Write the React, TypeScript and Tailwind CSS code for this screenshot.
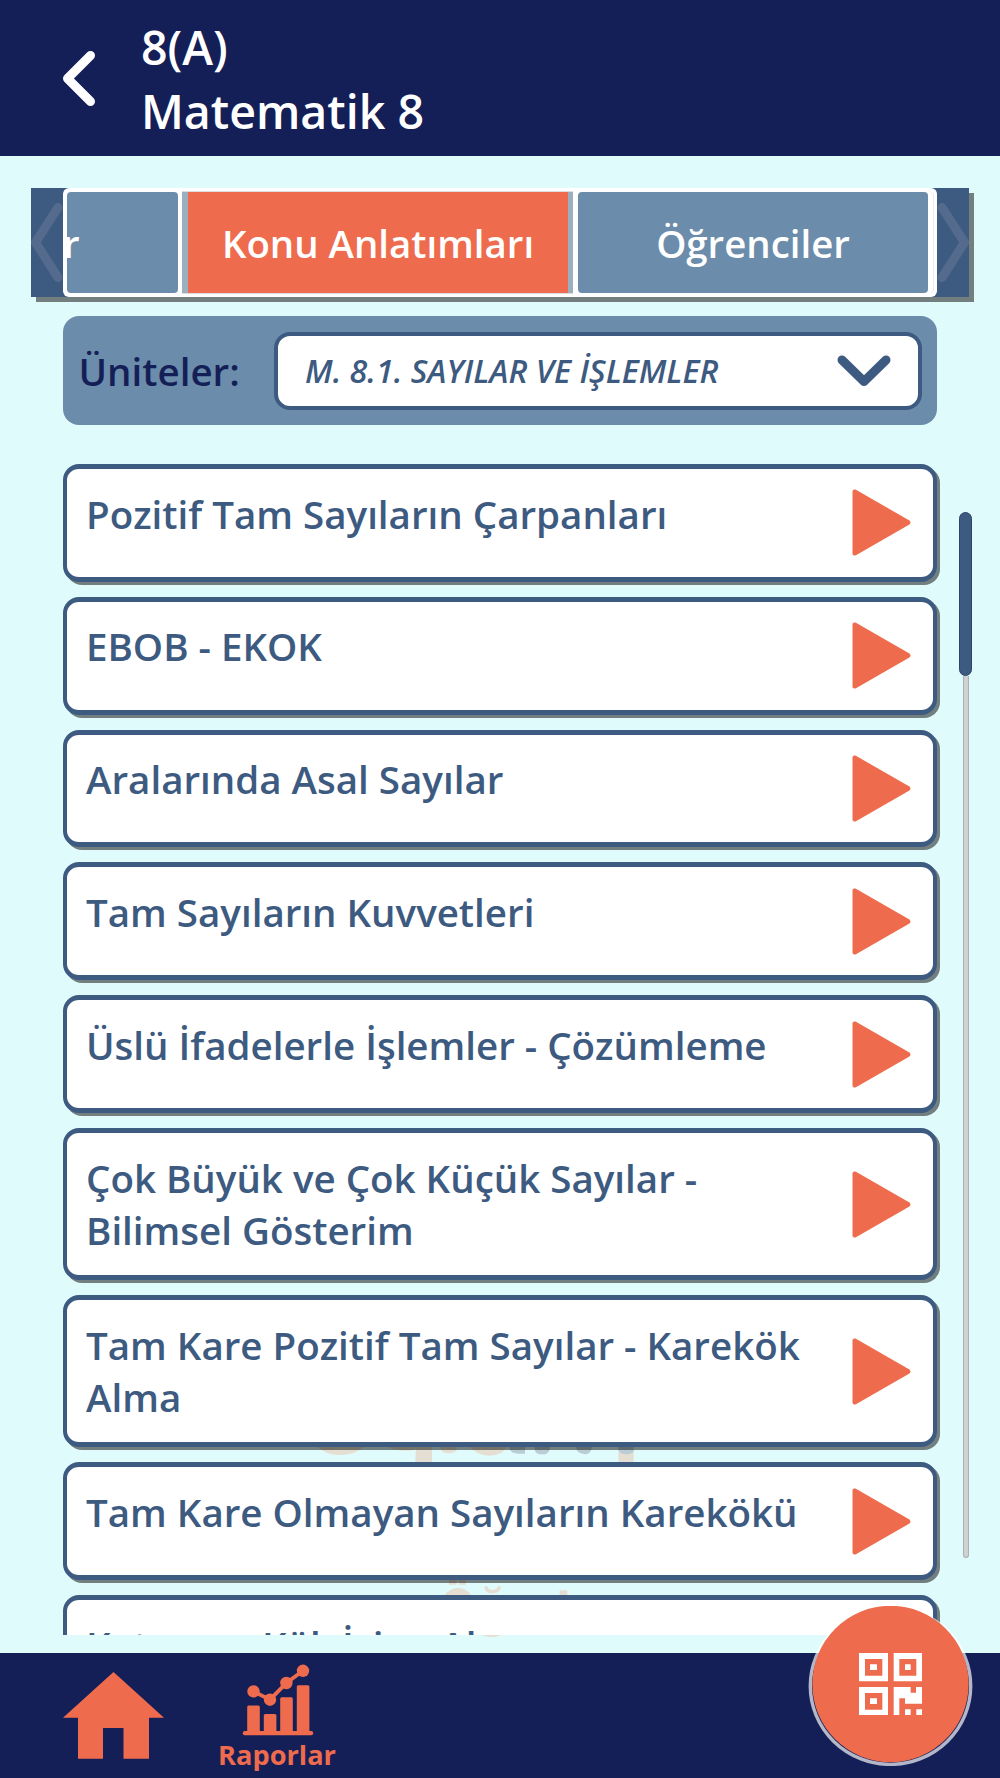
const topics = [
  ['Pozitif Tam Sayıların Çarpanları'],
  ['EBOB - EKOK'],
  ['Aralarında Asal Sayılar'],
  ['Tam Sayıların Kuvvetleri'],
  ['Üslü İfadelerle İşlemler - Çözümleme'],
  ['Çok Büyük ve Çok Küçük Sayılar -', 'Bilimsel Gösterim'],
  ['Tam Kare Pozitif Tam Sayılar - Karekök', 'Alma'],
  ['Tam Kare Olmayan Sayıların Karekökü'],
  ['Katsayıyı Kök İçine Alma'],
];

function TopicCard({ lines }: { lines: string[] }) {
  return (
    <li
      className={`${
        lines.length > 1 ? 'h-[152.2px]' : 'h-[117.8px]'
      } flex shrink-0 items-center justify-between rounded-[16px] border-x-4 border-y-[5px] border-[#3d5a80] bg-white pr-[22px] pl-[19px] shadow-[3px_3px_0_rgba(4,4,0,0.5)]`}
    >
      <div className="self-start pt-[18.6px] text-[38.5px] leading-[52.3px] whitespace-nowrap text-[#3d5a80]">
        {lines.map((line) => (
          <p key={line}>{line}</p>
        ))}
      </div>
      <svg className="h-[67px] w-[59px] shrink-0" viewBox="0 0 59 67" fill="#ee6c4d">
        <path d="M0.5 2.5Q0.5 0 3.5 0.6L57 31.2Q60 33.5 57 35.8L3.5 66.4Q0.5 67 0.5 64.5Z" />
      </svg>
    </li>
  );
}

function QrIcon() {
  return (
    <svg className="h-[62px] w-[63px]" viewBox="0 0 189 186" preserveAspectRatio="none" fillRule="evenodd">
      <g fill="#fff">
        <path d="M0 0H87V85H0ZM18 18V68H70V18ZM33 34H54V51H33Z" />
        <path d="M104 0H189V85H104ZM121 18V68H172V18ZM138 34H155V51H138Z" />
        <path d="M0 102H87V186H0ZM18 120V170H70V120ZM33 136H54V153H33Z" />
        <path d="M104 102H155V119H171V102H189V152H138V136H121V186H104Z" />
        <path d="M138 169H155V186H138ZM172 169H189V186H172Z" />
      </g>
    </svg>
  );
}

function Watermark() {
  return (
    <svg className="absolute top-[1435px] left-[300px] h-[210px] w-[350px]" viewBox="0 0 1050 630">
      <g fill="#e4dfd2">
        <path d="M45 30Q75 60 120 60Q165 60 192 35V20H45Z" />
        <path d="M255 30Q290 54 345 44V20H255Z" />
        <path d="M347 20H396V76Q394 82 392 85H345Q347 75 347 60Z" />
        <path d="M422 20H470V42Q466 55 446 55Q426 55 422 42Z" />
        <path d="M505 30Q530 62 570 62Q610 60 616 40V20H505Z" />
        <path d="M955 50H1001V85H955Z" />
        <path d="M447 430H470V449H447ZM477 430H498V449H477Z" />
        <path d="M430 485Q448 459 474 459Q502 459 516 485Z" />
        <path d="M779 466H802V485H779Z" />
        <path d="M547 598H603Q597 606 575 606Q553 606 547 598Z" />
      </g>
      <path d="M557 454Q560 470 577 470Q595 470 599 454" fill="none" stroke="#e4dfd2" strokeWidth="10" />
      <g fill="#bacdd7">
        <path d="M629 20H675V56H655Q634 56 629 42Z" />
        <path d="M704 20H749V44Q744 58 728 58Q706 58 704 44Z" />
        <path d="M829 20H875V42Q870 58 855 58Q832 56 829 40Z" />
        <path d="M955 20H1001V50Q992 58 978 58Q960 58 955 46Z" />
      </g>
    </svg>
  );
}

export default function App() {
  return (
    <div className="relative flex h-[1778px] w-[1000px] flex-col overflow-hidden bg-[#e0fbfc] font-['Open_Sans',sans-serif] font-semibold">
      <Watermark />

      <header className="flex h-[156px] shrink-0 bg-[#151f57] pl-[62px] text-white">
        <svg className="mt-[50px] h-[57px] w-[34px]" viewBox="0 0 34 57" fill="none" stroke="currentColor" strokeWidth="9" strokeLinecap="round" strokeLinejoin="round">
          <path d="M28.5 5.5L5.5 28.5L28.5 51.5" />
        </svg>
        <div className="pt-4 pl-[45px] text-[46.5px] leading-[63.7px]">
          <p>8(A)</p>
          <p>Matematik 8</p>
        </div>
      </header>

      <nav className="relative mt-8 ml-[31px] flex h-[109px] w-[938px] shrink-0 bg-[#3d5a80] text-[38.4px] text-white shadow-[5px_5px_0_rgba(4,4,0,0.5)]">
        <svg className="h-[109px] w-8" viewBox="0 0 32 109" fill="none" stroke="#546b8d" strokeWidth="9" strokeLinecap="round" strokeLinejoin="round">
          <path d="M27 19.5L4.5 54.5L27 89.5" />
        </svg>
        <div className="flex w-[874px] overflow-hidden rounded-[6px] bg-white py-1 pl-1">
          <div className="flex w-[111px] items-center rounded-[4px] bg-[#6b8dab]">
            <span className="-ml-1 pt-[2px]">r</span>
          </div>
          <div className="ml-1 flex w-[391px] items-center justify-center border-r-[5px] border-l-[6px] border-[#9bafbe] bg-[#ee6c4d] pt-[2px] shadow-[0_-1px_0_#dcdfe2,0_1px_0_#dcdfe2]">
            Konu Anlatımları
          </div>
          <div className="ml-[5px] flex w-[350px] items-center justify-center rounded-[4px] bg-[#6b8dab] pt-[2px] shadow-[5px_0_0_#fff,6px_0_0_#e8ecf0]">
            Öğrenciler
          </div>
        </div>
        <svg className="h-[109px] w-8" viewBox="0 0 32 109" fill="none" stroke="#546b8d" strokeWidth="9" strokeLinecap="round" strokeLinejoin="round">
          <path d="M5 19.5L27.5 54.5L5 89.5" />
        </svg>
      </nav>

      <section className="relative mt-[19px] ml-[63px] flex h-[109px] w-[874px] shrink-0 items-center justify-between rounded-[16px] bg-[#6b8dab] pr-[15px] pl-[15.5px]">
        <span className="pt-[2px] text-[38.5px] text-[#151f57]">Üniteler:</span>
        <button className="flex h-[78px] w-[648px] items-center justify-between rounded-[16px] border-4 border-[#3d5a80] bg-white pr-[27px] pl-[27px] text-[#3d5a80]">
          <span className="pt-[2px] text-[32.2px] whitespace-nowrap italic">M. 8.1. SAYILAR VE İŞLEMLER</span>
          <svg className="h-8 w-[54px]" viewBox="0 0 54 32" fill="none" stroke="currentColor" strokeWidth="9" strokeLinecap="round" strokeLinejoin="round">
            <path d="M5 5L27 26.5L49 5" />
          </svg>
        </button>
      </section>

      <main className="relative mt-[39px] flex h-[1171px] shrink-0">
        <ul className="flex w-[945px] flex-col gap-[15px] overflow-hidden pr-2 pl-[63px]">
          {topics.map((lines) => (
            <TopicCard key={lines[0]} lines={lines} />
          ))}
        </ul>
        <div className="mt-12 ml-[14px] flex h-[1046px] w-[13px] flex-col items-center">
          <div className="h-[164px] w-[13px] shrink-0 rounded-full border border-[#2d4465] bg-[#3d5a80]" />
          <div className="w-[6px] flex-1 rounded-b-full border border-t-0 border-[#a9b1b2] bg-[#d0d2d2]" />
        </div>
      </main>

      <footer className="relative mt-[18px] flex flex-1 bg-[#151f57] pl-[63px] text-[#ee6c4d]">
        <svg className="mt-[19px] h-[87px] w-[101px]" viewBox="0 0 101 87" fill="currentColor">
          <path d="M50.5 0L101 45.7H86V86.7H60.5V56H40V86.7H15V45.7H0Z" />
        </svg>
        <div className="ml-[53px] flex w-[120px] flex-col items-center">
          <svg className="mt-[11px] ml-px h-[72px] w-[72px] shrink-0" viewBox="0 0 72 72" fill="currentColor">
            <rect x="0.8" y="67" width="70.4" height="4.2" rx="2" />
            <rect x="5.2" y="41.6" width="12.6" height="27" rx="1.5" />
            <rect x="21.8" y="50" width="12.6" height="19" rx="1.5" />
            <rect x="38.2" y="33.2" width="12.6" height="36" rx="1.5" />
            <rect x="54.8" y="21.2" width="12.6" height="48" rx="1.5" />
            <path d="M11.5 27.4L28 35.7L44.4 19L61 6.8" fill="none" stroke="currentColor" strokeWidth="3.8" />
            <circle cx="11.5" cy="27.4" r="6.2" />
            <circle cx="28" cy="35.7" r="6.2" />
            <circle cx="44.4" cy="19" r="6.2" />
            <circle cx="61" cy="6.8" r="6.2" />
          </svg>
          <span className="text-[27.2px] leading-[38px] font-bold">Raporlar</span>
        </div>
        <button className="absolute -top-[47px] left-[808px] grid h-[160px] w-[165px] place-items-center">
          <svg className="col-start-1 row-start-1 h-[160px] w-[165px]" viewBox="0 0 165 160">
            <ellipse cx="82.5" cy="80" rx="80.2" ry="78.4" fill="none" stroke="#fff" strokeOpacity="0.68" strokeWidth="3.4" />
            <circle cx="82.5" cy="78" r="78.2" fill="#ee6c4d" />
          </svg>
          <span className="col-start-1 row-start-1 -mt-[5px]">
            <QrIcon />
          </span>
        </button>
      </footer>
    </div>
  );
}
